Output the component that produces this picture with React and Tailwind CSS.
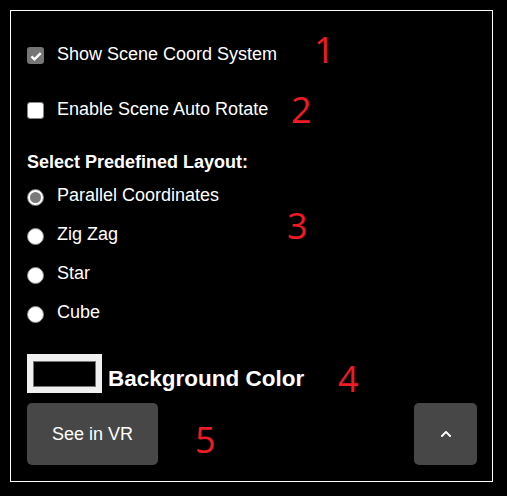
import { FaChevronUp } from 'react-icons/fa'

const font = { fontFamily: '"Liberation Sans", Arial, sans-serif' }
const numFont = { fontFamily: '"Open Sans", Calibri, sans-serif' }

function Check({ checked, label }) {
  return (
    <div className="flex items-start">
      {checked ? (
        <span className="flex h-[17px] w-[17px] items-center justify-center rounded-[3px] bg-[#767676]">
          <svg width="14" height="14" viewBox="0 0 16 16">
            <path d="M2.8 8.4l3.4 3.4L13.4 4.6" fill="none" stroke="#fff" strokeWidth="2.8" />
          </svg>
        </span>
      ) : (
        <span className="h-[17px] w-[17px] rounded-[3px] border border-[#858585] bg-white" />
      )}
      <span className="-mt-[2px] ml-[13px] text-[18px] leading-none text-white">{label}</span>
    </div>
  )
}

function Radio({ checked, label }) {
  return (
    <div className="flex items-start">
      {checked ? (
        <span className="flex h-[17px] w-[17px] items-center justify-center rounded-full border border-[#767676] bg-white">
          <span className="h-[11px] w-[11px] rounded-full bg-[#7a7a7a]" />
        </span>
      ) : (
        <span className="h-[17px] w-[17px] rounded-full border border-[#8a8a8a] bg-white" />
      )}
      <span className="-mt-[3px] ml-[13px] text-[18px] leading-none text-white">{label}</span>
    </div>
  )
}

function Num({ children, className }) {
  return (
    <span className={`absolute text-[36px] leading-none text-[#ed1c24] ${className}`} style={numFont}>
      {children}
    </span>
  )
}

export default function App() {
  return (
    <div className="h-[496px] w-[507px] bg-black p-[10px]" style={font}>
      <div className="relative h-[472px] w-[483px] border border-white pl-4 pr-[15px]">
        <div className="mt-[36px]">
          <Check checked label="Show Scene Coord System" />
        </div>
        <div className="mt-[38px]">
          <Check label="Enable Scene Auto Rotate" />
        </div>
        <div className="mt-[34px] text-[18px] font-bold leading-none text-white">
          Select Predefined Layout:
        </div>
        <div className="mt-[18px] flex flex-col gap-[22px]">
          <Radio checked label="Parallel Coordinates" />
          <Radio label="Zig Zag" />
          <Radio label="Star" />
          <Radio label="Cube" />
        </div>
        <div className="mt-[31px] flex items-start">
          <div className="h-[39px] w-[75px] bg-[#f0f0f0] pb-[6px] pl-[6px] pr-[6px] pt-[7px]">
            <div className="h-full w-full border border-[#767676] bg-black" />
          </div>
          <span className="ml-[6px] mt-[14px] text-[22.5px] font-bold leading-none text-white">Background Color</span>
        </div>
        <div className="mt-[10px] flex items-start justify-between">
          <button className="flex h-[62px] w-[131px] items-center justify-center rounded-[5px] bg-[#474747] text-[18px] text-white">
            See in VR
          </button>
          <button className="flex h-[62px] w-[63px] items-center justify-center rounded-[5px] bg-[#474747] text-white">
            <FaChevronUp size={12} />
          </button>
        </div>

        <Num className="left-[303px] top-[21px]">1</Num>
        <Num className="left-[280px] top-[81px]">2</Num>
        <Num className="left-[276px] top-[197px]">3</Num>
        <Num className="left-[327px] top-[350px]">4</Num>
        <Num className="left-[184px] top-[411px]">5</Num>
      </div>
    </div>
  )
}
